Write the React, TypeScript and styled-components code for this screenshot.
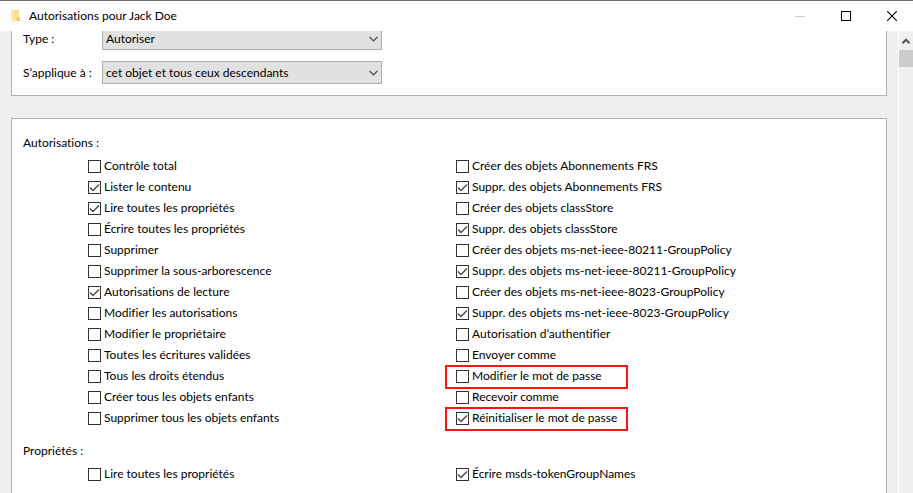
import React from 'react';
import styled, { createGlobalStyle } from 'styled-components';

const GlobalStyle = createGlobalStyle`
  *, *::before, *::after { box-sizing: border-box; }
  body {
    margin: 0;
    background: #efefef;
    color: #000;
    font: 12px/20px Lato, "Noto Sans", sans-serif;
    font-variant-ligatures: none;
  }
  button, select, input { font: inherit; font-variant-ligatures: none; color: inherit; margin: 0; }
`;

const Window = styled.div`
  display: flex;
  flex-direction: column;
  height: 100vh;
  overflow: hidden;
  border-top: 1px solid #6f6f6f;
`;

const TitleBar = styled.header`
  display: flex;
  align-items: center;
  flex: none;
  height: 30px;
  padding-left: 11px;
  background: #fff;
`;

const Title = styled.h1`
  flex: 1;
  margin: 0 0 0 8px;
  font-size: 12px;
  font-weight: 400;
`;

const WindowButtons = styled.div`
  display: flex;
  gap: 4px;
`;

const WindowButton = styled.button`
  display: grid;
  place-items: center;
  width: 42px;
  height: 28px;
  padding: 0;
  border: 0;
  background: none;
`;

const Body = styled.div`
  display: flex;
  flex: 1;
  min-height: 0;
`;

const Viewport = styled.main`
  flex: 1;
  min-width: 0;
  overflow: hidden;
`;

const ScrolledContent = styled.form`
  display: flex;
  flex-direction: column;
  gap: 22px;
  margin-top: -10px;
  padding: 0 11px;
`;

const Panel = styled.section`
  display: flex;
  flex-direction: column;
  gap: 11px;
  border: 1px solid #b1b1b1;
  background: #fff;
  padding: 5px 11px 11px;
`;

const PermissionPanel = styled(Panel)`
  gap: 12px;
  padding: 14px 11px 24px;
`;

const Field = styled.div`
  display: flex;
  align-items: center;
`;

const FieldLabel = styled.label`
  width: 79px;
`;

const SelectBox = styled.div`
  display: grid;
  align-items: center;
  width: 280px;

  > * { grid-area: 1 / 1; }
  > svg { justify-self: end; margin-right: 4px; pointer-events: none; }
`;

const Select = styled.select`
  appearance: none;
  width: 100%;
  height: 23px;
  padding: 0 20px 0 3px;
  border: 1px solid #adadad;
  border-radius: 0;
  background: #e1e1e1;
`;

const Group = styled.div`
  display: flex;
  flex-direction: column;
  gap: 3px;
`;

const GroupTitle = styled.h2`
  margin: 0;
  font-size: 12px;
  font-weight: 400;
`;

const Columns = styled.div`
  display: grid;
  grid-template-columns: minmax(0, 368px) 1fr;
  padding-left: 65px;
`;

const Column = styled.ul`
  margin: 0;
  padding: 0;
  list-style: none;
`;

const Item = styled.li<{ $highlighted?: boolean }>`
  position: relative;
  height: 21px;

  ${({ $highlighted }) =>
    $highlighted &&
    `&::after {
      content: '';
      position: absolute;
      top: -1px;
      left: -11px;
      width: 183px;
      height: 24px;
      border: 2px solid #ff1414;
      pointer-events: none;
    }`}
`;

const CheckLabel = styled.label`
  display: inline-flex;
  align-items: flex-start;
  gap: 3px;
  height: 21px;
  white-space: nowrap;
`;

const CheckBox = styled.span`
  display: grid;
  margin-top: 4px;
  > * { grid-area: 1 / 1; }
  > svg { visibility: hidden; pointer-events: none; }
  > input:checked + svg { visibility: visible; }
`;

const CheckInput = styled.input`
  appearance: none;
  width: 13px;
  height: 13px;
  border: 1px solid #333;
  background: #fff;
`;

const ScrollBar = styled.div`
  flex: none;
  width: 15px;
  border-left: 1px solid #fff;
  background: #efefef;
`;

const ScrollUp = styled.button`
  display: grid;
  place-items: center;
  width: 100%;
  height: 19px;
  padding: 0;
  border: 0;
  background: none;
`;

const ScrollThumb = styled.div`
  height: 17px;
  background: #cdcdcd;
`;

type Permission = { label: string; checked?: boolean; highlighted?: boolean };

const authorisations: Permission[][] = [
  [
    { label: 'Contrôle total' },
    { label: 'Lister le contenu', checked: true },
    { label: 'Lire toutes les propriétés', checked: true },
    { label: 'Écrire toutes les propriétés' },
    { label: 'Supprimer' },
    { label: 'Supprimer la sous-arborescence' },
    { label: 'Autorisations de lecture', checked: true },
    { label: 'Modifier les autorisations' },
    { label: 'Modifier le propriétaire' },
    { label: 'Toutes les écritures validées' },
    { label: 'Tous les droits étendus' },
    { label: 'Créer tous les objets enfants' },
    { label: 'Supprimer tous les objets enfants' },
  ],
  [
    { label: 'Créer des objets Abonnements FRS' },
    { label: 'Suppr. des objets Abonnements FRS', checked: true },
    { label: 'Créer des objets classStore' },
    { label: 'Suppr. des objets classStore', checked: true },
    { label: 'Créer des objets ms-net-ieee-80211-GroupPolicy' },
    { label: 'Suppr. des objets ms-net-ieee-80211-GroupPolicy', checked: true },
    { label: 'Créer des objets ms-net-ieee-8023-GroupPolicy' },
    { label: 'Suppr. des objets ms-net-ieee-8023-GroupPolicy', checked: true },
    { label: 'Autorisation d’authentifier' },
    { label: 'Envoyer comme' },
    { label: 'Modifier le mot de passe', highlighted: true },
    { label: 'Recevoir comme' },
    { label: 'Réinitialiser le mot de passe', checked: true, highlighted: true },
  ],
];

const properties: Permission[][] = [
  [{ label: 'Lire toutes les propriétés' }],
  [{ label: 'Écrire msds-tokenGroupNames', checked: true }],
];

function PermissionGroup({ title, columns }: { title: string; columns: Permission[][] }) {
  return (
    <Group role="group" aria-label={title}>
      <GroupTitle>{title} :</GroupTitle>
      <Columns>
        {columns.map((items, index) => (
          <Column key={index}>
            {items.map(({ label, checked, highlighted }) => (
              <Item key={label} $highlighted={highlighted}>
                <CheckLabel>
                  <CheckBox>
                    <CheckInput type="checkbox" defaultChecked={checked} />
                    <svg width="13" height="13" viewBox="0 0 13 13" fill="none" stroke="#444" strokeWidth="1.3">
                      <path d="M2 6.5 5 9.5 11 3.5" />
                    </svg>
                  </CheckBox>
                  {label}
                </CheckLabel>
              </Item>
            ))}
          </Column>
        ))}
      </Columns>
    </Group>
  );
}

function SelectField({ id, label, value }: { id: string; label: string; value: string }) {
  return (
    <Field>
      <FieldLabel htmlFor={id}>{label}</FieldLabel>
      <SelectBox>
        <Select id={id} defaultValue={value}>
          <option>{value}</option>
        </Select>
        <svg width="9" height="6" viewBox="0 0 9 6" fill="none" stroke="#444" strokeWidth="1.2">
          <path d="M.5 .8 4.5 4.8 8.5 .8" />
        </svg>
      </SelectBox>
    </Field>
  );
}

export default function App() {
  return (
    <>
      <GlobalStyle />
      <Window>
        <TitleBar>
          <svg width="10" height="14" viewBox="0 0 10 14" aria-hidden="true">
            <path d="M0 1h3v11H0z" fill="#f3d583" />
            <path d="M2 1h6v7h1v4H2z" fill="#fbdf8e" />
            <path d="M6 8h3v4H6z" fill="#f2cd6c" />
            <path d="M0 1 3 2v12L0 12z" fill="#ffe9a9" />
          </svg>
          <Title>Autorisations pour Jack Doe</Title>
          <WindowButtons>
            <WindowButton type="button" aria-label="Réduire" disabled>
              <svg width="10" height="10" shapeRendering="crispEdges">
                <path d="M0 5.5h10" stroke="#ccc" />
              </svg>
            </WindowButton>
            <WindowButton type="button" aria-label="Agrandir">
              <svg width="10" height="10" shapeRendering="crispEdges">
                <path d="M.5 .5h9v9h-9z" fill="none" stroke="#000" />
              </svg>
            </WindowButton>
            <WindowButton type="button" aria-label="Fermer">
              <svg width="10" height="10">
                <path d="M0 0 10 10M10 0 0 10" stroke="#000" strokeWidth="1.1" />
              </svg>
            </WindowButton>
          </WindowButtons>
        </TitleBar>
        <Body>
          <Viewport>
            <ScrolledContent>
              <Panel>
                <SelectField id="type" label="Type :" value="Autoriser" />
                <SelectField id="scope" label="S’applique à :" value="cet objet et tous ceux descendants" />
              </Panel>
              <PermissionPanel>
                <PermissionGroup title="Autorisations" columns={authorisations} />
                <PermissionGroup title="Propriétés" columns={properties} />
              </PermissionPanel>
            </ScrolledContent>
          </Viewport>
          <ScrollBar>
            <ScrollUp type="button" aria-label="Défiler vers le haut">
              <svg width="8" height="6" viewBox="0 0 8 6" fill="none" stroke="#555" strokeWidth="2">
                <path d="M.5 5.2 4 1.7 7.5 5.2" />
              </svg>
            </ScrollUp>
            <ScrollThumb />
          </ScrollBar>
        </Body>
      </Window>
    </>
  );
}
